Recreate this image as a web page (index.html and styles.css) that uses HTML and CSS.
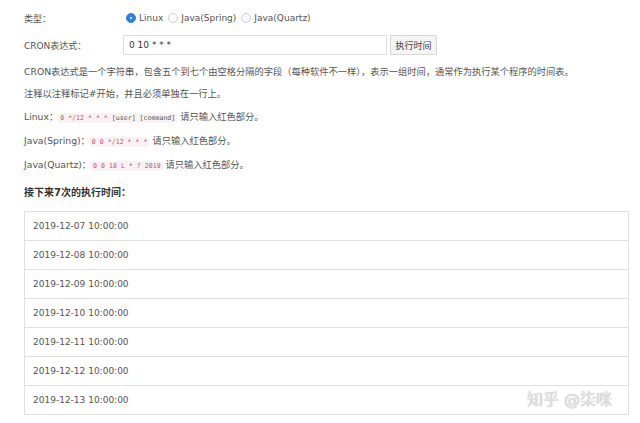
FILE: index.html
```html
<!DOCTYPE html>
<html lang="zh-CN">
<head>
<meta charset="utf-8">
<title>CRON</title>
<link rel="stylesheet" href="styles.css">
</head>
<body>
<div class="page">
  <div class="form-row first">
    <div class="label">类型：</div>
    <div class="radios">
      <label class="radio"><span class="dot checked"></span>Linux</label>
      <label class="radio"><span class="dot"></span>Java(Spring)</label>
      <label class="radio"><span class="dot"></span>Java(Quartz)</label>
    </div>
  </div>
  <div class="form-row second">
    <div class="label">CRON表达式：</div>
    <div class="input">0 10 * * *</div>
    <div class="btn">执行时间</div>
  </div>
  <div class="notes">
    <p>CRON表达式是一个字符串，包含五个到七个由空格分隔的字段（每种软件不一样），表示一组时间，通常作为执行某个程序的时间表。</p>
    <p>注释以注释标记#开始，并且必须单独在一行上。</p>
    <p>Linux：<code><span class="red">0 */12 * * *</span> [user] [command]</code> 请只输入红色部分。</p>
    <p>Java(Spring)：<code><span class="red">0 0 */12 * * *</span></code> 请只输入红色部分。</p>
    <p>Java(Quartz)：<code><span class="red">0 0 18 L * ? 2019</span></code> 请只输入红色部分。</p>
  </div>
  <h4 class="heading">接下来7次的执行时间：</h4>
  <ul class="list">
    <li>2019-12-07 10:00:00</li>
    <li>2019-12-08 10:00:00</li>
    <li>2019-12-09 10:00:00</li>
    <li>2019-12-10 10:00:00</li>
    <li>2019-12-11 10:00:00</li>
    <li>2019-12-12 10:00:00</li>
    <li>2019-12-13 10:00:00</li>
  </ul>
  <div class="watermark">知乎 @柒咪</div>
</div>
</body>
</html>
```

FILE: styles.css
```css
html, body {
  margin: 0;
  padding: 0;
  background: #ffffff;
}
body {
  font-family: "DejaVu Sans", "Noto Sans CJK SC", sans-serif;
  font-size: 9px;
  color: #444;
}
.page {
  position: relative;
  padding: 8px 11px 0 24px;
}
.form-row {
  display: flex;
  align-items: center;
  height: 20px;
}
.form-row.second {
  margin-top: 7px;
}
.label {
  width: 99px;
  flex: none;
  color: #555;
}
.radios {
  display: flex;
  align-items: center;
  gap: 2px;
}
.radio {
  display: flex;
  align-items: center;
  gap: 3px;
  color: #555;
}
.dot {
  width: 10px;
  height: 10px;
  border-radius: 50%;
  border: 1px solid #d0d0d0;
  background: #fafafa;
  box-sizing: border-box;
  margin-left: 3px;
}
.dot.checked {
  background: #2f7fe0;
  border-color: #2f7fe0;
  position: relative;
}
.dot.checked::after {
  content: "";
  position: absolute;
  left: 3px;
  top: 3px;
  width: 2px;
  height: 2px;
  border-radius: 50%;
  background: #fff;
}
.input {
  width: 264px;
  height: 20px;
  box-sizing: border-box;
  border: 1px solid #dcdcdc;
  padding: 0 5px;
  display: flex;
  align-items: center;
  color: #333;
}
.btn {
  margin-left: 3px;
  width: 47px;
  height: 20px;
  box-sizing: border-box;
  border: 1px solid #d8d8d8;
  background: #f4f4f4;
  display: flex;
  align-items: center;
  justify-content: center;
  color: #444;
}
.notes {
  margin-top: 5.5px;
  font-size: 9.25px;
}
.notes p {
  margin: 0;
  line-height: 22.8px;
  color: #555;
}
code {
  font-family: "DejaVu Sans Mono", "Liberation Mono", monospace;
  font-size: 6.6px;
  background: #f9f2f4;
  color: #555;
  padding: 1px 2px;
  border-radius: 2px;
}
.red {
  color: #d04a6a;
}
.heading {
  margin: 5.5px 0 0 0;
  height: 20px;
  line-height: 20px;
  font-size: 10px;
  font-weight: bold;
  color: #333;
}
.list {
  list-style: none;
  margin: 8px 0 0 0;
  padding: 0;
  border: 1px solid #e0e0e0;
}
.list li {
  height: 28px;
  line-height: 28px;
  padding-left: 8px;
  color: #555;
  border-top: 1px solid #e0e0e0;
}
.list li:first-child {
  border-top: none;
}
.watermark {
  position: absolute;
  left: 527px;
  top: 386px;
  font-size: 16px;
  color: #e6e6e6;
  text-shadow: 0 0 1px #999;
  white-space: nowrap;
}
```
